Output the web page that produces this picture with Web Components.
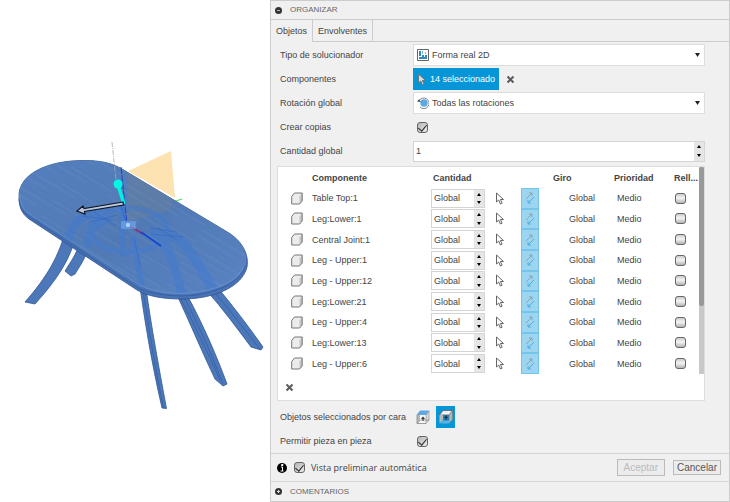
<!DOCTYPE html>
<html lang="es">
<head>
<meta charset="utf-8">
<title>Organizar</title>
<style>
    body {
        margin: 0;
        background: #fff;
        color: #444;
        font: 9px/12px "Liberation Sans", Arial, sans-serif;
    }
    arrange-app {
        min-height: 100vh;
    }
</style>
</head>
<body>
<arrange-app>
    <table-model></table-model>
    <arrange-panel slot="panel"></arrange-panel>
</arrange-app>

<script>
const controlStyle = `
    * {
        box-sizing: border-box;
    }
    button, input, select {
        margin: 0;
        padding: 0;
        border: 0;
        border-radius: 0;
        background: none;
        color: inherit;
        font: inherit;
    }
    svg {
        display: block;
        flex: none;
    }
    input[type=checkbox] {
        appearance: none;
        display: grid;
        place-items: center;
        flex: none;
        width: 11px;
        height: 11px;
        border: 1px solid #666;
        border-radius: 3px;
        background: linear-gradient(#ccc, #f4f4f4 45%, #b4b4b4);
    }
    input[type=checkbox]:checked {
        background: linear-gradient(135deg, #b4b4b4, #ececec);
    }
    input[type=checkbox]:checked::before {
        content: "";
        width: 4px;
        height: 7px;
        margin-bottom: 2px;
        border: solid #222;
        border-width: 0 1px 1px 0;
        transform: rotate(40deg);
    }
`;

const clearIcon = `
    <svg width="9" height="9" viewBox="0 0 9 9" fill="none" stroke="#5c5c5c" stroke-width="2">
        <path d="M1.500 1.500l6 6M7.500 1.500l-6 6"/>
    </svg>`;

const cursorIcon = (fill, stroke) => `
    <svg width="10" height="13" viewBox="0 0 10 13">
        <path d="M1.500 1v9l2.200-2 1.700 4 1.700-.8-1.700-3.700H8.500z" fill="${fill}" stroke="${stroke}" stroke-width="1"/>
    </svg>`;

class ArrangeApp extends HTMLElement {
    constructor() {
        super();
        this.attachShadow({mode: "open"}).innerHTML = `
            <style>
                :host {
                    display: grid;
                    grid-template-columns: 27fr 46fr;
                    align-items: start;
                }
            </style>
            <slot></slot>
            <slot name="panel"></slot>`;
    }
}

class TableModel extends HTMLElement {
    constructor() {
        super();
        this.attachShadow({mode: "open"}).innerHTML = `
            <style>
                :host {
                    display: block;
                    min-width: 0;
                }
                svg {
                    display: block;
                    width: 100%;
                }
            </style>
            <svg viewBox="0 0 270 502" role="img" aria-label="Mesa">
                <defs>
                    <clipPath id="face">
                        <path d="M19 197C18 173 50 160 85 160.500C100 160.500 112 163 122 169L229 233C243 242 249 256 245 267C238 284 212 293 182 294C162 294 147 290 137 284L30 214C22 209 19 204 19 197Z"/>
                    </clipPath>
                    <linearGradient id="wood" x1="0" y1="0" x2="1" y2="1">
                        <stop offset="0" stop-color="#5580be"/>
                        <stop offset=".5" stop-color="#527bb6"/>
                        <stop offset="1" stop-color="#5c86c6"/>
                    </linearGradient>
                    <pattern id="grain" width="97" height="19" patternUnits="userSpaceOnUse" patternTransform="rotate(31)">
                        <path d="M0 2h60M30 9h67M10 14h50" stroke="#365f9c" stroke-width=".6" opacity=".22"/>
                        <path d="M0 5h40M50 11.500h47M0 17h70" stroke="#86a7d8" stroke-width=".6" opacity=".25"/>
                    </pattern>
                </defs>
                <path d="M128 171L171 151L175 198Z" fill="#fde2b2"/>
                <path d="M167 204l15-5" stroke="#4ee03c" stroke-width="1.200"/>

                <g fill="#4c77b8" stroke="#2f5796" stroke-width=".8">
                    <path d="M64 236C58 256 48 276 25 302L35 304C55 282 67 264 74 243Z"/>
                    <path d="M79 245C76 254 72 260 65 271L71 276L75 274C80 266 84 260 87 252Z"/>
                    <path d="M140 287C145 322 151 360 162 408L166.500 408.500C159 368 151 325 146 288Z"/>
                    <path d="M176 293C190 323 203 354 215 379L223 386L227 384C217 357 204 326 187 295Z"/>
                    <path d="M207 291C222 308 237 328 251 347L261 350L263 347C249 327 233 306 218 288Z"/>
                </g>
                <g fill="none" stroke="#3461a5" stroke-width=".8">
                    <path d="M143 290C149 330 156 373 163.500 408"/>
                    <path d="M180 297C195 326 208 353 220 380M184 297C199 326 211 353 223 384"/>
                    <path d="M214 292C231 311 247 333 260 349"/>
                </g>

                <path d="M19 197C18 173 50 160 85 160.500C100 160.500 112 163 122 169L229 233C243 242 249 255 247 267C242 287 214 299 182 299C162 299 147 296 137 290L29 219C21 213 19 206 19 197Z" fill="#4873b4" stroke="#2d528f" stroke-width=".8"/>
                <g clip-path="url(#face)">
                    <path fill="url(#wood)" d="M0 140h270v180H0z"/>
                    <path d="M128 171L171 151L175 198L170 210L126 222Z" fill="#67809d" opacity=".55"/>
                    <path d="M0 140h270v180H0z" fill="url(#grain)"/>
                    <g fill="none" stroke="#3d78d4" opacity=".42">
                        <ellipse cx="129" cy="230" rx="38" ry="22" stroke-width="5"/>
                        <path d="M68 245C68 226 80 214 105 210M88 247C87 232 94 224 110 219" stroke-width="8"/>
                        <path d="M133 236C138 260 140 278 144 302" stroke-width="6"/>
                        <path d="M150 231C168 238 175 267 184 302" stroke-width="9"/>
                        <path d="M156 234C184 232 193 254 216 296" stroke-width="10"/>
                        <path d="M122 202v55" stroke-width="6"/>
                    </g>
                    <g fill="none" stroke="#3264c6" stroke-width="1" opacity=".5">
                        <path d="M82 216l31 4M88 223l29-8M94 212l22 14M150 228l27 4M151 234l32 3M157 227l20 13M134 238l6 28"/>
                    </g>
                </g>
                <path d="M19 199C20 209 24 213 31 218L138 288C148 293 164 296 184 296C214 295 240 283 245 266" fill="none" stroke="#315b9d" stroke-width=".8"/>
                <path d="M20 195C20 205 23 210 31 215L138 284C148 290 164 293.500 184 293.500C214 292 238 281 244 266" fill="none" stroke="#7198d4" stroke-width=".6"/>

                <g fill="none">
                    <path d="M112 142l4 38" stroke="#aaa" stroke-width=".8" stroke-dasharray="5 1 1 1"/>
                    <path d="M121 167l6 57" stroke="#2a43bd" stroke-width="1" stroke-dasharray="7 1"/>
                    <path d="M120 203l7 21" stroke="#2667df" stroke-width="1"/>
                    <path d="M128 225l15 9" stroke="#8a3274" stroke-width="1.500"/>
                    <path d="M141 232l20 14" stroke="#1747cf" stroke-width="2"/>
                    <path d="M118 185l6 19" stroke="#00f0df" stroke-width="3.500"/>
                </g>
                <circle cx="118" cy="184" r="4.500" fill="#00f7e2"/>
                <path d="M123 202L84 208.500L83 206L77 211L85 214L84.500 211.500L123.500 205Z" fill="#bcc7dc" stroke="#111927" stroke-width="1.200"/>
                <path d="M121 221h15v8h-15z" fill="#82b4f2" opacity=".55" stroke="#5791dc" stroke-width=".6"/>
                <circle cx="128" cy="225" r="2.800" fill="#a9d2ff" stroke="#4386df" stroke-width=".8"/>
            </svg>`;
    }
}

// A label on the left and one control on the right, in the same root
class FormRow extends HTMLElement {
    connectedCallback() {
        if (!this.shadowRoot) {
            this.attachShadow({mode: "open"});
        }
        this.shadowRoot.innerHTML = `
            <style>
                ${controlStyle}
                :host {
                    display: grid;
                    grid-template-columns: 133px 1fr;
                    align-items: center;
                    height: 24px;
                    white-space: nowrap;
                }
                .control {
                    display: flex;
                    align-items: center;
                    min-width: 0;
                }
            </style>
            <label for="control">${this.getAttribute("label")}</label>
            <div class="control">${this.control()}</div>`;
    }
}

class SelectRow extends FormRow {
    control() {
        return `
            <style>
                .box {
                    display: flex;
                    align-items: center;
                    gap: 3px;
                    width: 100%;
                    height: 22px;
                    padding: 0 4px 0 3px;
                    border: 1px solid #ddd;
                    background: #fff;
                }
                select {
                    appearance: none;
                    flex: 1;
                    min-width: 0;
                    height: 100%;
                }
            </style>
            <div class="box">
                <slot></slot>
                <select id="control"><option>${this.getAttribute("value")}</option></select>
                <svg width="5" height="4" viewBox="0 0 5 4"><path d="M0 0h5L2.500 4z" fill="#222"/></svg>
            </div>`;
    }
}

class PickRow extends FormRow {
    control() {
        return `
            <style>
                .pick {
                    display: flex;
                    align-items: center;
                    gap: 3px;
                    height: 22px;
                    padding: 0 4px;
                    background: #0696d7;
                    color: #fff;
                }
                .clear {
                    margin-left: 7px;
                }
            </style>
            <button class="pick" id="control">${cursorIcon("#ddd", "#69747b")}${this.getAttribute("value")}</button>
            <button class="clear" aria-label="Borrar selección">${clearIcon}</button>`;
    }
}

class CheckRow extends FormRow {
    control() {
        return `
            <style>
                input {
                    margin-left: 4px;
                }
            </style>
            <input type="checkbox" id="control" checked>`;
    }
}

class NumberRow extends FormRow {
    control() {
        return `
            <style>
                number-stepper {
                    width: 100%;
                    height: 21px;
                }
            </style>
            <number-stepper label="${this.getAttribute("label")}" value="${this.getAttribute("value")}"></number-stepper>`;
    }
}

class FaceRow extends FormRow {
    control() {
        return `
            <style>
                .control {
                    gap: 4px;
                }
                button {
                    display: grid;
                    place-items: center;
                    width: 19px;
                    height: 22px;
                }
                .on {
                    background: #0696d7;
                }
            </style>
            <button id="control" aria-label="Cara superior">
                <svg width="14" height="14" viewBox="0 0 14 14">
                    <path d="M4.500 4.500V1H13v8.500l-3 4H1z" fill="#f6f6f6"/>
                    <path d="M1 5h3v5l-3 3.500z" fill="#b5b5b5"/>
                    <path d="M13 1v9l-3 3.500V5z" fill="#dcdcdc" stroke="#888" stroke-width=".6"/>
                    <path d="M1 13.500L4.500 10H13" fill="none" stroke="#888" stroke-width=".8"/>
                    <path d="M1 5v8.500h9" fill="none" stroke="#888" stroke-width=".8"/>
                    <path d="M4 .5h9.500l-3 4.500H.5z" fill="#62a8e0"/>
                    <path d="M7 11V8" stroke="#333"/>
                    <path d="M5 9l2-2.500L9 9z" fill="#333"/>
                </svg>
            </button>
            <button class="on" aria-label="Cara inferior" aria-pressed="true">
                <svg width="14" height="14" viewBox="0 0 14 14">
                    <path d="M4 5h6v5l-2 3H4z" fill="#1d86bf"/>
                    <path d="M4 .5h9.500l-3 4.500H.5z" fill="#f0f0f0" stroke="#555" stroke-width=".7"/>
                    <path d="M.5 5H4v5L.5 13.500z" fill="#b9b9b9"/>
                    <path d="M13.500.5v9l-3.500 4V5z" fill="#b4b4b4" stroke="#777" stroke-width=".6"/>
                    <path d="M1 13.500L4 10.500h6v3z" fill="#58b4e4"/>
                    <path d="M7 10V7" stroke="#12303f"/>
                    <path d="M5 8l2-2.500L9 8z" fill="#12303f"/>
                </svg>
            </button>`;
    }
}

class NumberStepper extends HTMLElement {
    connectedCallback() {
        if (!this.shadowRoot) {
            this.attachShadow({mode: "open"});
        }
        this.shadowRoot.innerHTML = `
            <style>
                ${controlStyle}
                :host {
                    display: flex;
                    box-sizing: border-box;
                    border: 1px solid #d4d4d4;
                    background: #fff;
                }
                input {
                    flex: 1;
                    min-width: 0;
                    padding-left: 2px;
                }
                div {
                    display: grid;
                    grid-template-rows: 1fr 1fr;
                    width: 10px;
                    background: #e6e6e6;
                }
                button {
                    display: grid;
                    place-items: center;
                }
            </style>
            <input type="text" aria-label="${this.getAttribute("label")}" value="${this.getAttribute("value")}">
            <div>
                <button aria-label="Más"><svg width="4" height="3" viewBox="0 0 4 3"><path d="M2 0l2 3H0z"/></svg></button>
                <button aria-label="Menos"><svg width="4" height="3" viewBox="0 0 4 3"><path d="M0 0h4L2 3z"/></svg></button>
            </div>`;
    }
}

class ComponentTable extends HTMLElement {
    constructor() {
        super();
        this.attachShadow({mode: "open"});
    }

    set components(components) {
        this._components = components;
        this.render();
    }

    renderRow(name) {
        return `
            <tr>
                <td class="solid">
                    <svg width="12" height="13" viewBox="0 0 12 13">
                        <path d="M.7 4.500L3.500 1h7.700v8L8.500 12H.7z" fill="#ececec"/>
                        <path d="M8.500 4.500L11.200 1v8L8.500 12z" fill="#c4c4c4"/>
                        <path d="M.7 4.500L3.500 1h7.700v8L8.500 12H.7z" fill="none" stroke="#777" stroke-width="1" stroke-linejoin="round"/>
                    </svg>
                </td>
                <td>${name}</td>
                <td><number-stepper label="Cantidad de ${name}" value="Global"></number-stepper></td>
                <td class="pick"><button aria-label="Seleccionar ${name}">${cursorIcon("#fff", "#666")}</button></td>
                <td class="flip"><button aria-label="Dirección de ${name}">
                    <svg width="10" height="12" viewBox="0 0 10 12" fill="none" stroke-width="1">
                        <path d="M1 7l6-6M4 1h3v3" stroke="#85a5b4"/>
                        <path d="M9 5l-6 6M3 8v3h3" stroke="#4fadde"/>
                    </svg>
                </button></td>
                <td class="turn">Global</td>
                <td class="priority">Medio</td>
                <td class="fill"><input type="checkbox" aria-label="Relleno de ${name}"></td>
            </tr>`;
    }

    render() {
        this.shadowRoot.innerHTML = `
            <style>
                ${controlStyle}
                :host {
                    display: block;
                    border: 1px solid #ddd;
                    background: #fff;
                    white-space: nowrap;
                }
                .scroller {
                    display: flex;
                }
                table {
                    flex: 1;
                    height: 207px;
                    border-collapse: collapse;
                    table-layout: fixed;
                }
                th, td {
                    padding: 0;
                    text-align: left;
                }
                thead tr {
                    height: 21px;
                }
                .qty {
                    padding-left: 2px;
                }
                .solid svg {
                    margin-left: 13px;
                }
                td number-stepper {
                    width: 54px;
                    height: 19px;
                }
                .pick button {
                    display: block;
                    margin-left: 4px;
                }
                .flip {
                    background: #9bd5f0;
                    box-shadow: inset 0 0 0 1px #74c4ec;
                }
                .flip button {
                    display: grid;
                    place-items: center;
                    width: 100%;
                }
                .turn-head {
                    padding-left: 14px;
                }
                .turn {
                    padding-left: 30px;
                }
                .priority {
                    padding-left: 3px;
                }
                .fill input {
                    margin-left: 1px;
                }
                .bar {
                    width: 5px;
                    background: #c8c8c8;
                }
                .thumb {
                    height: 67%;
                    border-radius: 2px;
                    background: #999;
                }
                .tools {
                    display: flex;
                    align-items: center;
                    height: 26px;
                    padding-left: 7px;
                }
            </style>
            <div class="scroller">
                <table>
                    <colgroup>
                        <col style="width: 34px"><col><col style="width: 60px"><col style="width: 30px">
                        <col style="width: 18px"><col style="width: 75px"><col style="width: 60px"><col style="width: 25px">
                    </colgroup>
                    <thead>
                        <tr>
                            <th></th><th>Componente</th><th class="qty">Cantidad</th><th></th><th></th>
                            <th class="turn-head">Giro</th><th>Prioridad</th><th>Rell...</th>
                        </tr>
                    </thead>
                    <tbody>${this._components.map(name => this.renderRow(name)).join("")}</tbody>
                </table>
                <div class="bar"><div class="thumb"></div></div>
            </div>
            <div class="tools"><button aria-label="Quitar componente">${clearIcon}</button></div>`;
    }
}

class ArrangePanel extends HTMLElement {
    constructor() {
        super();
        this.attachShadow({mode: "open"}).innerHTML = `
            <style>
                ${controlStyle}
                :host {
                    display: block;
                    box-sizing: border-box;
                    border: 1px solid #ccc;
                    background: #f0f0f0;
                    white-space: nowrap;
                }
                h2 {
                    display: flex;
                    align-items: center;
                    gap: 8px;
                    height: 19px;
                    margin: 0;
                    padding-left: 4px;
                    color: #666;
                    font-size: 8px;
                    font-weight: normal;
                }
                .title {
                    border-bottom: 1px solid #ccc;
                }
                .tabs {
                    display: flex;
                    height: 22px;
                    border-bottom: 1px solid #ccc;
                }
                .tabs button {
                    padding: 0 5px;
                    border-right: 1px solid #ccc;
                }
                .tabs button:first-child {
                    margin-bottom: -1px;
                    background: #f0f0f0;
                }
                .fields {
                    padding: 1px 24px 0 9px;
                }
                component-table {
                    margin: 3px 24px 3px 6px;
                }
                .footer {
                    display: flex;
                    align-items: center;
                    height: 29px;
                    padding: 0 8px 0 6px;
                    border: solid #d4d4d4;
                    border-width: 1px 0;
                }
                .preview {
                    display: flex;
                    flex: 1;
                    align-items: center;
                    gap: 6px;
                    margin-left: 7px;
                    font: 9px/12px "Open Sans", "Noto Sans", sans-serif;
                }
                .footer button {
                    height: 15px;
                    padding: 0 3px;
                    border: 1px solid #bbb;
                    background: #ececec;
                    color: #555;
                    font-size: 10px;
                }
                .footer button:disabled {
                    height: 17px;
                    margin-right: 8px;
                    padding: 0 6px;
                    color: #bbb;
                }
            </style>
            <h2 class="title">
                <svg width="7" height="7" viewBox="0 0 7 7"><circle cx="3.500" cy="3.500" r="3.500" fill="#333"/><path d="M2 3.500h3" stroke="#bbb"/></svg>
                ORGANIZAR
            </h2>
            <div class="tabs" role="tablist">
                <button role="tab" aria-selected="true">Objetos</button>
                <button role="tab" aria-selected="false">Envolventes</button>
            </div>
            <div class="fields">
                <select-row label="Tipo de solucionador" value="Forma real 2D">
                    <svg width="12" height="12" viewBox="0 0 12 12">
                        <path d="M.5.5h11v11H.5z" fill="#fff" stroke="#666"/>
                        <path d="M2 8h8v2H2zM2 2h2v5H2zM5 6h2v2H5zM8 6h2v2H8z" fill="#3287c7"/>
                        <path d="M5 2h1v3H5zM8 3h1v2H8z" fill="#80b9e3"/>
                    </svg>
                </select-row>
                <pick-row label="Componentes" value="14 seleccionado"></pick-row>
                <select-row label="Rotación global" value="Todas las rotaciones">
                    <svg width="12" height="12" viewBox="0 0 12 12">
                        <circle cx="7" cy="6" r="3.700" fill="#5baae4"/>
                        <path d="M2 4a5.300 5.300 0 1 1 1 6" fill="none" stroke="#777" stroke-width=".9"/>
                        <path d="M0 4.500L2.500 2v2L5 5z" fill="#333"/>
                    </svg>
                </select-row>
                <check-row label="Crear copias"></check-row>
                <number-row label="Cantidad global" value="1"></number-row>
            </div>
            <component-table></component-table>
            <div class="fields">
                <face-row label="Objetos seleccionados por cara"></face-row>
                <check-row label="Permitir pieza en pieza"></check-row>
            </div>
            <div class="footer">
                <svg width="10" height="10" viewBox="0 0 10 10"><circle cx="5" cy="5" r="5"/><path d="M4 4h1.500v4M3.500 8h3M4.500 1.500h1.500v1H4.500z" fill="none" stroke="#fff"/></svg>
                <label class="preview"><input type="checkbox" checked>Vista preliminar automática</label>
                <button disabled>Aceptar</button>
                <button>Cancelar</button>
            </div>
            <h2>
                <svg width="7" height="7" viewBox="0 0 7 7"><circle cx="3.500" cy="3.500" r="3.500" fill="#333"/><path d="M2 3.500h3M3.500 2v3" stroke="#ddd"/></svg>
                COMENTARIOS
            </h2>`;
    }

    connectedCallback() {
        this.shadowRoot.querySelector("component-table").components = [
            "Table Top:1",
            "Leg:Lower:1",
            "Central Joint:1",
            "Leg - Upper:1",
            "Leg - Upper:12",
            "Leg:Lower:21",
            "Leg - Upper:4",
            "Leg:Lower:13",
            "Leg - Upper:6"
        ];
    }
}

customElements.define("number-stepper", NumberStepper);
customElements.define("select-row", SelectRow);
customElements.define("pick-row", PickRow);
customElements.define("check-row", CheckRow);
customElements.define("number-row", NumberRow);
customElements.define("face-row", FaceRow);
customElements.define("component-table", ComponentTable);
customElements.define("arrange-panel", ArrangePanel);
customElements.define("table-model", TableModel);
customElements.define("arrange-app", ArrangeApp);
</script>
</body>
</html>
